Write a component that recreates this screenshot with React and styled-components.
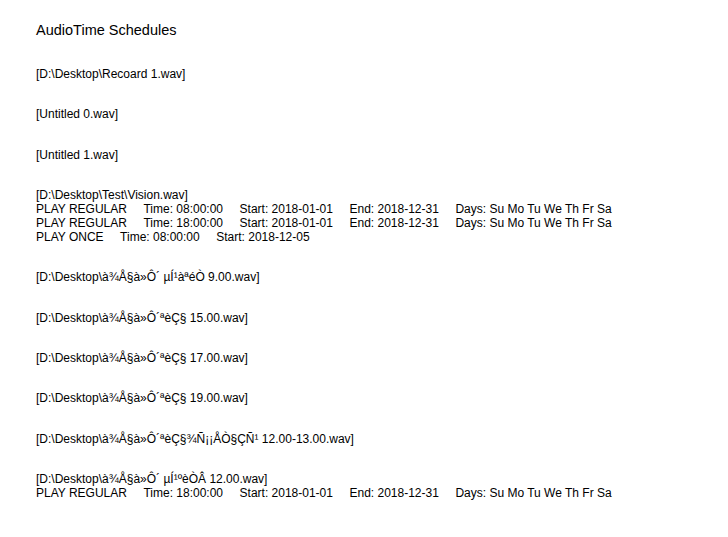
import React from "react";
import styled, { createGlobalStyle } from "styled-components";

const GlobalStyle = createGlobalStyle`
  html, body {
    margin: 0;
    padding: 0;
    background: #ffffff;
  }
  body {
    font-family: "Liberation Sans", Arial, sans-serif;
    color: #000000;
  }
`;

const Page = styled.div`
  padding: 21px 36px 20px 36px;
`;

const Title = styled.h1`
  margin: 0 0 28px 0;
  font-size: 14.5px;
  font-weight: normal;
  line-height: 18px;
`;

const EntryList = styled.div`
  display: flex;
  flex-direction: column;
  gap: 26.33px;
`;

const Entry = styled.div`
  font-size: 12px;
  line-height: 14px;
`;

const FileName = styled.div`
  white-space: nowrap;
`;

const ScheduleRow = styled.div`
  display: flex;
  gap: 16.5px;
  white-space: nowrap;
`;

const Field = styled.span``;

const entries = [
  { file: "D:\\Desktop\\Recoard 1.wav", schedules: [] },
  { file: "Untitled 0.wav", schedules: [] },
  { file: "Untitled 1.wav", schedules: [] },
  {
    file: "D:\\Desktop\\Test\\Vision.wav",
    schedules: [
      { type: "PLAY REGULAR", time: "08:00:00", start: "2018-01-01", end: "2018-12-31" },
      { type: "PLAY REGULAR", time: "18:00:00", start: "2018-01-01", end: "2018-12-31" },
      { type: "PLAY ONCE", time: "08:00:00", start: "2018-12-05" },
    ],
  },
  { file: "D:\\Desktop\\à¾Å§à»Ô´ µÍ¹àªéÒ 9.00.wav", schedules: [] },
  { file: "D:\\Desktop\\à¾Å§à»Ô´ªèÇ§ 15.00.wav", schedules: [] },
  { file: "D:\\Desktop\\à¾Å§à»Ô´ªèÇ§ 17.00.wav", schedules: [] },
  { file: "D:\\Desktop\\à¾Å§à»Ô´ªèÇ§ 19.00.wav", schedules: [] },
  { file: "D:\\Desktop\\à¾Å§à»Ô´ªèÇ§¾Ñ¡¡ÅÒ§ÇÑ¹ 12.00-13.00.wav", schedules: [] },
  {
    file: "D:\\Desktop\\à¾Å§à»Ô´ µÍ¹ºèÒÂ 12.00.wav",
    schedules: [
      { type: "PLAY REGULAR", time: "18:00:00", start: "2018-01-01", end: "2018-12-31" },
    ],
  },
];

const DAYS = "Su Mo Tu We Th Fr Sa";

function Schedule({ item }) {
  return (
    <ScheduleRow>
      <Field>{item.type}</Field>
      <Field>Time: {item.time}</Field>
      <Field>Start: {item.start}</Field>
      {item.end && <Field>End: {item.end}</Field>}
      {item.end && <Field>Days: {DAYS}</Field>}
    </ScheduleRow>
  );
}

export default function App() {
  return (
    <>
      <GlobalStyle />
      <Page>
        <Title>AudioTime Schedules</Title>
        <EntryList>
          {entries.map((entry, i) => (
            <Entry key={i}>
              <FileName>[{entry.file}]</FileName>
              {entry.schedules.map((s, j) => (
                <Schedule key={j} item={s} />
              ))}
            </Entry>
          ))}
        </EntryList>
      </Page>
    </>
  );
}
